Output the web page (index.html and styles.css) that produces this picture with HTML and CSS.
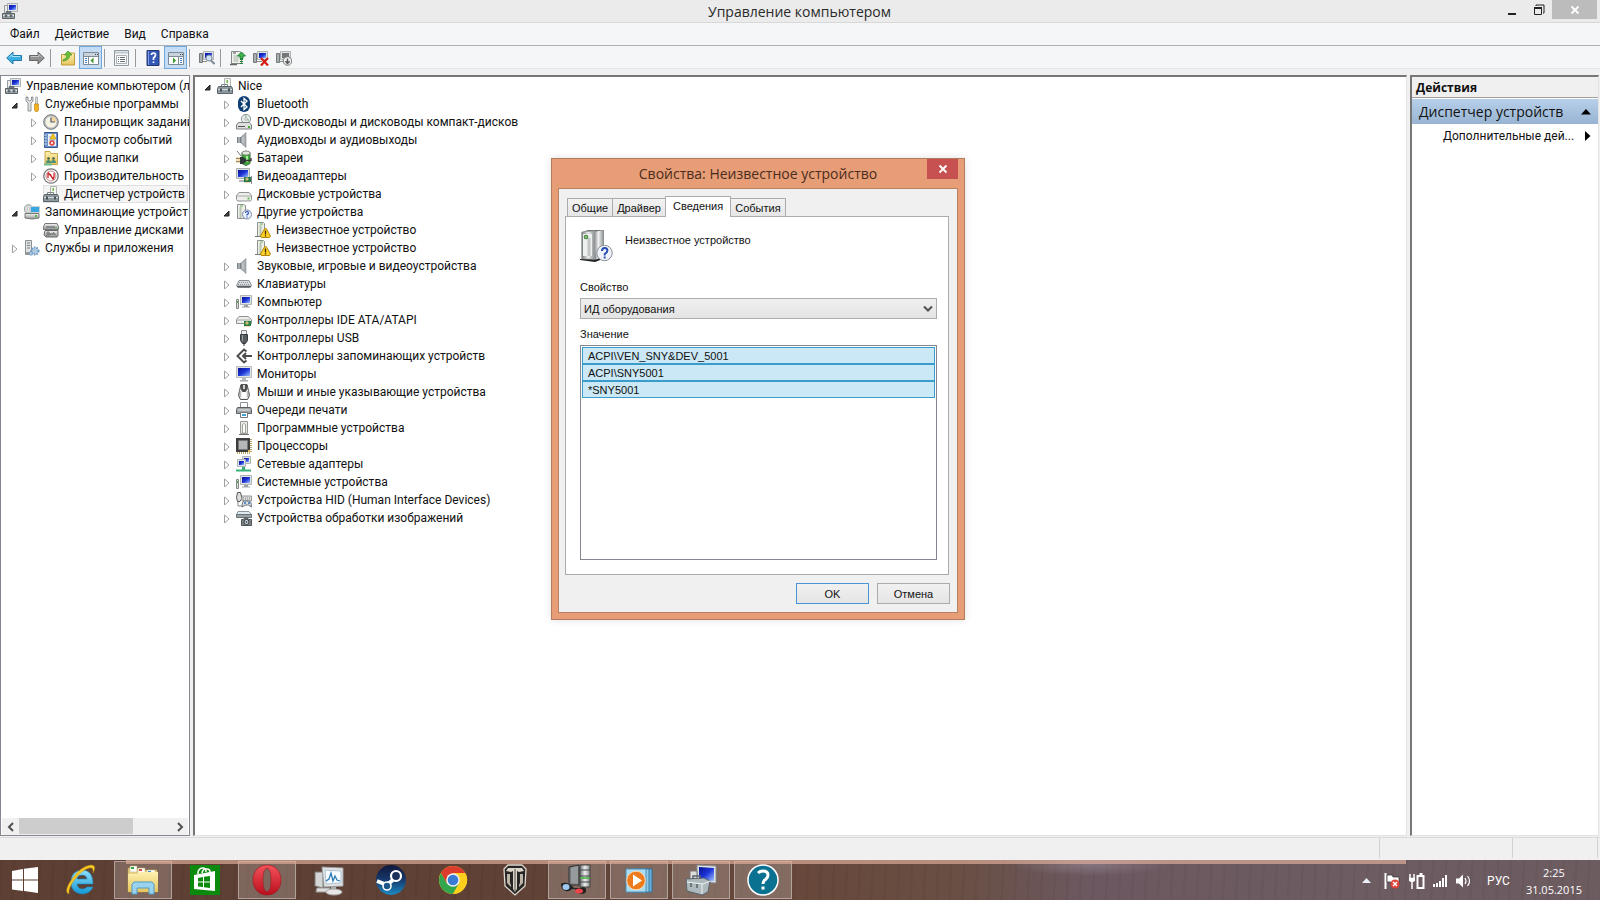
FILE: index.html
```html
<!DOCTYPE html>
<html lang="ru">
<head>
<meta charset="utf-8">
<title>Управление компьютером</title>
<link rel="stylesheet" href="styles.css">
</head>
<body>
<svg class="sprite" aria-hidden="true">
<defs>
<linearGradient id="scr" x1="0" y1="0" x2="1" y2="1"><stop offset="0" stop-color="#0a1290"/><stop offset=".5" stop-color="#1c34d8"/><stop offset="1" stop-color="#9fc2ff"/></linearGradient>
<linearGradient id="gm" x1="0" y1="0" x2="0" y2="1"><stop offset="0" stop-color="#f4f4f2"/><stop offset="1" stop-color="#8f9495"/></linearGradient>
<linearGradient id="gh" x1="0" y1="0" x2="1" y2="0"><stop offset="0" stop-color="#707477"/><stop offset=".5" stop-color="#f0f0f0"/><stop offset="1" stop-color="#85898b"/></linearGradient>
<linearGradient id="bl" x1="0" y1="0" x2="0" y2="1"><stop offset="0" stop-color="#8fe0fb"/><stop offset="1" stop-color="#1497d4"/></linearGradient>
<linearGradient id="fy" x1="0" y1="0" x2="0" y2="1"><stop offset="0" stop-color="#fdf1b0"/><stop offset="1" stop-color="#e6c45c"/></linearGradient>
<linearGradient id="rd" x1="0" y1="0" x2="0" y2="1"><stop offset="0" stop-color="#f5525a"/><stop offset="1" stop-color="#b90f1c"/></linearGradient>
<linearGradient id="st" x1="0" y1="0" x2="0" y2="1"><stop offset="0" stop-color="#11173c"/><stop offset=".5" stop-color="#173a6c"/><stop offset="1" stop-color="#1b8cc4"/></linearGradient>
</defs>
<symbol id="closed" viewBox="0 0 10 10"><path d="M3.500 2v8L8 6z" fill="#fff" stroke="#a0a0a0"/></symbol>
<symbol id="open" viewBox="0 0 10 10"><path d="M8 4v5H3z" fill="#404040" stroke="#222"/></symbol>
<symbol id="mon" viewBox="0 0 16 16"><path d="M.5 .5h15v11H.5z" fill="#dfe2e2" stroke="#b7bcbe"/><path d="M2 2h12v8H2z" fill="url(#scr)"/><path d="M6 12h4v2H6z" fill="#b6babb"/><path d="M4 14h8v1.500H4z" fill="#a9adae"/></symbol>
<symbol id="comp" viewBox="0 0 16 16"><path d="M4.500 1.500h11v9h-11z" fill="#dfe2e2" stroke="#aeb4b6"/><path d="M6 3h8v6H6z" fill="url(#scr)"/><path d="M8 11h4v1.500H8zM6 12.500h8v1H6z" fill="#9da2a4"/><path d="M.5 5.500h2v9h-2z" fill="#d8dad6" stroke="#84898b"/><path d="M1 7h1v2H1z" fill="#55b13b"/></symbol>
<symbol id="mgmt" viewBox="0 0 16 16"><path d="M5.500 .5h10v8h-10z" fill="#e3e6e8" stroke="#aab1b5"/><path d="M7 2h7v5H7z" fill="url(#scr)"/><path d="M2.500 2.500h3v8h-3z" fill="#eee" stroke="#989da0"/><path d="M.5 10.500h12v5H.500z" fill="#9fa8ac" stroke="#5a6367"/><path d="M1 12.500h11" stroke="#e8ecee"/><path d="M4 10V8.500h5V10M3 12h2v2H3zM8 12h2v2H8z" fill="#6d767a" stroke="#545d61" stroke-width=".6"/></symbol>
<symbol id="tools" viewBox="0 0 16 16"><path d="M2 1v4l2 2v8h3V7l2-2V1L7.500 1v3L5.500 5 4 4V1z" fill="#e1e3e3" stroke="#777d80" stroke-width=".8"/><path d="M11.500 1h2v7h-2z" fill="#ddd" stroke="#8d9294" stroke-width=".6"/><path d="M10.500 8h4v6l-1 1.500h-2l-1-1.500z" fill="#f2b31f" stroke="#b47a0b" stroke-width=".6"/></symbol>
<symbol id="clock" viewBox="0 0 16 16"><circle cx="8" cy="8" r="7.300" fill="#b9bdbf" stroke="#75797b"/><circle cx="8" cy="8" r="5.500" fill="#f6f3e3"/><path d="M8 8V2.500A5.500 5.500 0 0 1 13.500 8z" fill="#f4d79b"/><path d="M8 3.500V8h4" fill="none" stroke="#4c5b76" stroke-width="1.200"/></symbol>
<symbol id="events" viewBox="0 0 16 16"><path d="M1.500 .5h13v15h-13z" fill="#6a8fcb" stroke="#33578e"/><path d="M5 2h8v12H5z" fill="#edf2f8"/><path d="M0 3h4M0 6h4M0 9h4M0 12h4" stroke="#d2dbea"/><path d="M6 5h6M6 8h6M6 11h6" stroke="#8da0bd"/><path d="M10 1l3 6H7z" fill="#f6c624" stroke="#ad8507" stroke-width=".5"/><circle cx="9" cy="11" r="2.700" fill="#de4a44"/><path d="M8 10l2 2m0-2l-2 2" stroke="#fff" stroke-width=".8"/></symbol>
<symbol id="shared" viewBox="0 0 16 16"><path d="M2 1.500h5l1 2h6.500v11H2z" fill="url(#fy)" stroke="#c9a750"/><g fill="#3b5e4c"><circle cx="5.500" cy="8.500" r="1.300"/><circle cx="10.500" cy="8.500" r="1.300"/></g><path d="M3 13q0-3 2.500-3T8 13zM8 13q0-3 2.500-3t2.500 3z" fill="#4a8f73"/><path d="M1 14.500h8" stroke="#67bb8b" stroke-width="2"/></symbol>
<symbol id="perf" viewBox="0 0 16 16"><circle cx="8" cy="8" r="7.200" fill="#fff" stroke="#777" stroke-width="1.300"/><circle cx="8" cy="8" r="5" fill="#fff" stroke="#9c4544" stroke-width=".6"/><path d="M5 10V5.500l2.500 1 2 4 1.500-1V5M5 4.500l6 7" fill="none" stroke="#cf2428" stroke-width="1.300"/></symbol>
<symbol id="devmgr" viewBox="0 0 16 16"><path d="M7.500 .5h6v9h-6z" fill="#f4f5ef" stroke="#b1b5b1"/><path d="M9.500 2h1.500v3H9.500z" fill="#74bb51"/><path d="M4.500 9V6.500h6V9" fill="none" stroke="#7b868b"/><path d="M1.500 8.500h13l1 2v5H.5v-5z" fill="#8e9a9f" stroke="#5a666b"/><path d="M1 11.500h14" stroke="#d2dadd"/><path d="M3 10.500h2v3H3zm8 0h2v3h-2z" fill="#485358"/></symbol>
<symbol id="storage" viewBox="0 0 16 16"><circle cx="4.500" cy="5" r="4.300" fill="#dadddd" stroke="#92989a"/><circle cx="4.500" cy="5" r="1.200" fill="#fff" stroke="#999" stroke-width=".5"/><path d="M6.500 2.500h9v6h-9z" fill="#37a6e1" stroke="#c8d0d4"/><path d="M1 9.500h14v4.500q-7 2-14 0z" fill="url(#gm)" stroke="#777"/><path d="M11 11h2v2h-2z" fill="#58b948"/></symbol>
<symbol id="diskmgr" viewBox="0 0 16 16"><path d="M2 1.500h12l1.500 3v3H.5v-3z" fill="url(#gm)" stroke="#777"/><path d="M2 8.500h13v5l-1 1.500H3l-2-2z" fill="url(#gm)" stroke="#666"/><path d="M3 5h9M4 12h8" stroke="#505659"/><path d="M4 14v-4h2v4M10 10l3 3" fill="none" stroke="#777"/><path d="M12 5h2v1h-2z" fill="#6ab654"/></symbol>
<symbol id="services" viewBox="0 0 16 16"><path d="M1.500 .5h6v14h-6z" fill="#dfe2e2" stroke="#8b9193"/><path d="M3 3h3M3 5.500h3M3 8h3" stroke="#7b8588"/><path d="M2 13h4" stroke="#555"/><circle cx="11" cy="11" r="3.500" fill="#bed8ef" stroke="#6995bd" stroke-dasharray="1.500 1" stroke-width="2"/><circle cx="11" cy="11" r="1.300" fill="#fff" stroke="#6995bd" stroke-width=".7"/><circle cx="7" cy="13.500" r="1.800" fill="#a9c6df" stroke="#648cb1" stroke-width=".6"/></symbol>
<symbol id="bt" viewBox="0 0 16 16"><rect x="2" width="12" height="16" rx="6" fill="#0d3f75"/><path d="M5 5l6 6-3 2.500v-11L11 5l-6 6" fill="none" stroke="#fff" stroke-width="1.300"/></symbol>
<symbol id="dvd" viewBox="0 0 16 16"><circle cx="10" cy="5" r="4.600" fill="#e8ecec" stroke="#8e9698"/><path d="M10 5l-2-4h3zM10 5l3 3V5z" fill="#a9cdb0"/><circle cx="10" cy="5" r="1.300" fill="#fff" stroke="#888" stroke-width=".6"/><path d="M2.500 8.500h11l2 2.500v4H.5v-4z" fill="#dee0e0" stroke="#7b8183"/><path d="M2 12.500h7" stroke="#555"/><path d="M12 12h2v2h-2z" fill="#46b02d"/></symbol>
<symbol id="spk" viewBox="0 0 16 16"><path d="M1 5h4v6H1z" fill="#788186"/><path d="M5 5l5-4.500v15L5 11z" fill="#a9aeb1" stroke="#81878a" stroke-width=".6"/><path d="M3 5v6M7 5v6" stroke="#d5d8d9"/></symbol>
<symbol id="bat" viewBox="0 0 16 16"><path d="M6 2.500l4-1.500 4 1.500v11l-4 2-4-2z" fill="#40aa3c" stroke="#356b34"/><ellipse cx="10" cy="3" rx="4" ry="2" fill="#e4e9e2" stroke="#777" stroke-width=".7"/><path d="M11 6v6" stroke="#abeb9c" stroke-width="2"/><path d="M1 1l4 5" stroke="#777"/><path d="M0 8.500h5M0 11.500h5" stroke="#a98a3a" stroke-width="1.500"/><path d="M4 7h3l3 2v3l-3 2H4z" fill="#30383a"/><path d="M10 10.500h5V8" fill="none" stroke="#333" stroke-width="1.300"/></symbol>
<symbol id="video" viewBox="0 0 16 16"><path d="M.5 .5h13v10H.5z" fill="#d9dcdd" stroke="#a9aeb1"/><path d="M2 2h10v7H2z" fill="url(#scr)"/><path d="M3 12h5v2H3z" fill="#b0b4b5"/><path d="M8 9h7v5H8z" fill="#26784c"/><path d="M10 10h2v2h-2zM9 15v-1M11 15v-1M13 15v-1" fill="#bdd9c7" stroke="#d3b760"/><path d="M15.500 8v8" stroke="#888"/></symbol>
<symbol id="disk" viewBox="0 0 16 16"><path d="M3 6.500h10l2.500 3v4l-1 1.500h-13l-1-1.500v-4z" fill="#ededea" stroke="#8d9294"/><path d="M1 10h14" stroke="#aaa"/><path d="M11.500 11.500h2v2h-2z" fill="#64b957"/></symbol>
<symbol id="unk" viewBox="0 0 16 16"><path d="M1.500 .5h6l2 1v13h-8z" fill="#edf0e8" stroke="#8d9290"/><path d="M3.500 3h2v11h-2z" fill="#b8c3b2"/><path d="M4 2h3" stroke="#6bb34e"/><circle cx="11" cy="10.500" r="4.500" fill="#eaf0fb" stroke="#7c8aa6"/><path d="M9.500 9q0-1.500 1.500-1.500T12.500 9q0 .8-1.500 1.800v.7M11 12.500v1" fill="none" stroke="#2850b4" stroke-width="1.200"/></symbol>
<symbol id="warn" viewBox="0 0 16 16"><path d="M2.500 .5h6l1 1v13h-7z" fill="#edf0e8" stroke="#8d9290"/><path d="M4.500 3h2v11h-2z" fill="#b8c3b2"/><path d="M5 2h3" stroke="#6bb34e"/><path d="M0 14.500h6" stroke="#777"/><path d="M9.500 7l1-1 1 1 4 7-1 1.500h-8L5.500 14z" fill="#ffd02a" stroke="#b28707" stroke-linejoin="round"/><path d="M10.500 8.500v4M10.500 13.300v1.200" stroke="#3b2b00" stroke-width="1.300"/></symbol>
<symbol id="kbd" viewBox="0 0 16 16"><path d="M3 4.500h10l2.500 5-1.500 2H2L.5 9.500z" fill="#d9dbdf" stroke="#8c9094"/><path d="M3 6.500h10M2 8.500h12" stroke="#9296a2" stroke-dasharray="1 1"/><path d="M1 10.500h14" stroke="#5a5f66" stroke-width="1.500"/></symbol>
<symbol id="ide" viewBox="0 0 16 16"><path d="M3 4.500h9l3.500 3v4H.5v-4z" fill="#ededea" stroke="#8d9294"/><path d="M1 8h13" stroke="#aaa"/><path d="M8 9h7v5H8z" fill="#2c7f46"/><path d="M10 10h2v2h-2zM9 15v-1M11 15v-1M13 15v-1" fill="#bdd9c7" stroke="#d3b760"/></symbol>
<symbol id="usb" viewBox="0 0 16 16"><path d="M5.500 .5h5v4h-5z" fill="#eee" stroke="#888"/><path d="M4.500 4.500h7v6l-2 3h-3l-2-3z" fill="#555b5f" stroke="#383d40"/><path d="M6.500 5v6" stroke="#9a9fa2"/><path d="M7.500 13h1v3h-1z" fill="#333"/></symbol>
<symbol id="stor" viewBox="0 0 16 16"><path d="M10.500 3.500L8 1.500 1.500 8 8 14.500l2.500-2M8 8h8M10 5L7 8l3 3" fill="none" stroke="#4d4d4d" stroke-width="2"/><path d="M3 8l5-5" stroke="#aaa" stroke-width=".7"/></symbol>
<symbol id="mouse" viewBox="0 0 16 16"><path d="M5 .5h6l1.500 6 1 5-2 4h-7l-2-4 1-5z" fill="#ececec" stroke="#555"/><path d="M4.500 1h7v4L9.500 8h-3l-2-3z" fill="#505050"/><path d="M8 1v4" stroke="#fff" stroke-width="1.500"/><path d="M6 9q2-2 4 0v5H6z" fill="#fff"/><path d="M4 7v6M12 7v6" stroke="#888"/></symbol>
<symbol id="prn" viewBox="0 0 16 16"><path d="M4.500 .5h7v6h-7z" fill="#fff" stroke="#8d9294"/><path d="M1.500 5.500h13l1 2v4H.5v-4z" fill="#9fa4a6" stroke="#5b6063"/><path d="M2 8h12" stroke="#e8e8e8"/><path d="M4.500 10.500h7v5h-7z" fill="#fff" stroke="#777"/><path d="M6 12h4v2H6z" fill="#39a1d8"/></symbol>
<symbol id="soft" viewBox="0 0 16 16"><path d="M4.500 1.500h7v12h-7z" fill="#e8eae5" stroke="#999"/><path d="M6.500 4.500q1.500-2 3 0V13h-3z" fill="#fff" stroke="#9da698"/><path d="M3 14.500h10" stroke="#777"/></symbol>
<symbol id="cpu" viewBox="0 0 16 16"><path d="M0 0h14v14H0z" fill="#3d3d3d"/><path d="M2.500 2.500h9v9h-9z" fill="#b4b8ba" stroke="#777"/><path d="M15 1v14M1 15h14" stroke="#a58b42" stroke-dasharray="1 1" stroke-width="1.600"/><path d="M12 12h2v2h-2z" fill="#e1b94b"/></symbol>
<symbol id="net" viewBox="0 0 16 16"><path d="M6.500 .5h8v7h-8z" fill="#dfe2e2" stroke="#aeb4b6"/><path d="M8 2h5v4H8z" fill="url(#scr)"/><path d="M1.500 3.500h8v7h-8z" fill="#dfe2e2" stroke="#aeb4b6"/><path d="M3 5h5v4H3z" fill="url(#scr)"/><path d="M6 11h3v3H6z" fill="#40a96d"/><path d="M0 14.500h15" stroke="#36b279" stroke-width="2"/></symbol>
<symbol id="hid" viewBox="0 0 16 16"><path d="M1.500 .5h3l1.500 6-2 3H1.500l-1-4z" fill="#ddd" stroke="#555"/><path d="M6 4h9.500v5H6z" fill="#d9dbdd" stroke="#999"/><path d="M7 6h8M7 8h8" stroke="#888" stroke-dasharray="1 1"/><path d="M2 10v4h4" fill="none" stroke="#888"/><path d="M6 15q0-6 2.500-6h4q3 0 3 6l-3-2h-3z" fill="#dbe0e4" stroke="#687078"/><path d="M8 11h2m2 0h2" stroke="#2e71b5" stroke-width="1.500"/></symbol>
<symbol id="img" viewBox="0 0 16 16"><path d="M2 1.500h11l2.500 3H.5z" fill="#ddeaf1" stroke="#88979e"/><path d="M.5 4.500h15v3H.5z" fill="#9aa4a8" stroke="#697377"/><path d="M5.500 9.500h2l1-1.500h3l1 1.500h3v6h-10z" fill="#7b8489" stroke="#4e5559"/><circle cx="10.500" cy="12" r="2.500" fill="#d9e5ec" stroke="#333"/><circle cx="10.500" cy="12" r="1" fill="#456"/></symbol>
<symbol id="back" viewBox="0 0 16 16"><path d="M.7 8L7 2v3.500h8.500v5H7V14z" fill="#38aee3" stroke="#2277a5"/><path d="M3 7.500l3-3v2h8" fill="none" stroke="#a8e3fa"/></symbol>
<symbol id="fwd" viewBox="0 0 16 16"><path d="M15.300 8L9 2v3.500H.5v5H9V14z" fill="#909090" stroke="#666"/><path d="M2 6.500h8v-2l3 3" fill="none" stroke="#c4c4c4"/></symbol>
<symbol id="up" viewBox="0 0 16 16"><path d="M1.500 4.500h4l1-1.500h8v12h-13z" fill="url(#fy)" stroke="#c19b3d"/><path d="M3 10q4-1 4-5H4.500L8 1l4 4H9.500Q10 10 3 11z" fill="#6bc43c" stroke="#3d8d1f" stroke-width=".7"/></symbol>
<symbol id="paneL" viewBox="0 0 16 16"><path d="M.5 2.500h15v12H.5z" fill="#fff" stroke="#7d8b96"/><path d="M1 3h14v3H1z" fill="#cbd3da"/><path d="M1 6.500h14M5.500 7v7" stroke="#7d8b96"/><path d="M2 8.500h2M2 10.500h2M2 12.500h2" stroke="#4480bd"/><path d="M10.500 7.500v6l-3-3z" fill="#3a9a2a"/><path d="M12 4.500h1m1 0h1" stroke="#446"/></symbol>
<symbol id="paneR" viewBox="0 0 16 16"><path d="M.5 2.500h15v12H.5z" fill="#fff" stroke="#7d8b96"/><path d="M1 3h14v3H1z" fill="#cbd3da"/><path d="M1 6.500h14M10.500 7v7" stroke="#7d8b96"/><path d="M12 8.500h2M12 10.500h2M12 12.500h2" stroke="#4480bd"/><path d="M5 7.500v6l3-3z" fill="#3a9a2a"/><path d="M12 4.500h1m1 0h1" stroke="#446"/></symbol>
<symbol id="props" viewBox="0 0 16 16"><path d="M.5 .5h14v15H.5z" fill="#f5f6f7" stroke="#919aa1"/><path d="M1 2.500h13" stroke="#c1cad1" stroke-width="2"/><path d="M2.500 5.500h10v8h-10z" fill="#fff" stroke="#a8b0b6"/><path d="M4 7.500h1m1 0h5M4 9.500h1m1 0h5M4 11.500h1m1 0h5" stroke="#68747d"/></symbol>
<symbol id="help" viewBox="0 0 16 16"><path d="M2 .5h12v15H2z" fill="#3458b8" stroke="#22356d"/><path d="M3.500 1v14" stroke="#7d9de7"/><path d="M6.500 5q0-2 2-2t2 2q0 1.500-2 3v2M8.500 11.500v1.500" fill="none" stroke="#fff" stroke-width="1.700"/></symbol>
<symbol id="scan" viewBox="0 0 16 16"><path d="M4.500 1.500h10v8h-10z" fill="#dfe2e2" stroke="#aeb4b6"/><path d="M6 3h7v5H6z" fill="url(#scr)"/><path d="M.5 3.500h3v9h-3z" fill="#a9aeb0" stroke="#74797b"/><path d="M4 11.500h4" stroke="#888"/><circle cx="10" cy="8" r="3" fill="#cfe2f5" stroke="#7b8a96"/><path d="M12 10.500l3.500 3.500" stroke="#7e8b94" stroke-width="2"/></symbol>
<symbol id="upd" viewBox="0 0 16 16"><path d="M1.500 1.500h8l2 1v11h-10z" fill="#f0f2ec" stroke="#848987"/><path d="M3.500 5h5v7h-5z" fill="#cad3c8"/><path d="M0 14.500h7" stroke="#666" stroke-width="1.500"/><path d="M3 3h3" stroke="#555"/><path d="M11.500 2l4 4h-2.500v2.500h-3V6H7.500zM10 9.500h3M10 11.500h3M10 13.500h3" fill="#42b14f" stroke="#26843a" stroke-width="1"/></symbol>
<symbol id="del" viewBox="0 0 16 16"><path d="M4.500 1.500h10v8h-10z" fill="#dfe2e2" stroke="#aeb4b6"/><path d="M6 3h7v5H6z" fill="url(#scr)"/><path d="M.5 3.500h3v9h-3z" fill="#a9aeb0" stroke="#74797b"/><path d="M4 11.500h5" stroke="#888"/><path d="M8 8l7 7.500M15 8l-7 7.500" stroke="#d61e18" stroke-width="2.200"/></symbol>
<symbol id="dis" viewBox="0 0 16 16"><path d="M4.500 1.500h10v8h-10z" fill="#dfe2e2" stroke="#aeb4b6"/><path d="M6 3h7v5H6z" fill="#777"/><path d="M.5 3.500h3v9h-3z" fill="#a9aeb0" stroke="#74797b"/><path d="M4 11.500h4" stroke="#888"/><circle cx="11.500" cy="11" r="4.300" fill="#f2f2f2" stroke="#777"/><path d="M11.500 8.500v5M9.300 11.300l2.200 2.200 2.200-2.200" fill="none" stroke="#555" stroke-width="1.400"/></symbol>
</svg>

<main class="window">
<header class="titlebar">
  <svg class="ic"><use href="#mgmt"/></svg>
  <h1>Управление компьютером</h1>
  <div class="winbtns">
    <button class="min" aria-label="Свернуть"><svg width="10" height="12"><path d="M0 9h8v2H0z" fill="#222"/></svg></button>
    <button class="max" aria-label="Восстановить"><svg width="12" height="12"><path d="M3 2V1h8v8h-1" fill="none" stroke="#222"/><path d="M1.500 3.500h7v7h-7z" fill="none" stroke="#222"/><path d="M1 4h8" stroke="#222" stroke-width="2"/></svg></button>
    <button class="cls" aria-label="Закрыть"><svg width="10" height="10"><path d="M1.500 1.500l7 7m0-7l-7 7" stroke="#fff" stroke-width="1.800"/></svg></button>
  </div>
</header>
<nav class="menu"><button>Файл</button><button>Действие</button><button>Вид</button><button>Справка</button></nav>
<div class="toolbar">
  <button aria-label="Назад"><svg class="ic"><use href="#back"/></svg></button><button aria-label="Вперед"><svg class="ic"><use href="#fwd"/></svg></button><i class="sep"></i>
  <button aria-label="Вверх"><svg class="ic"><use href="#up"/></svg></button><button class="on" aria-label="Дерево консоли"><svg class="ic"><use href="#paneL"/></svg></button><i class="sep"></i>
  <button aria-label="Свойства"><svg class="ic"><use href="#props"/></svg></button><i class="sep"></i>
  <button aria-label="Справка"><svg class="ic"><use href="#help"/></svg></button><button class="on" aria-label="Панель действий"><svg class="ic"><use href="#paneR"/></svg></button><i class="sep"></i>
  <button aria-label="Обновить конфигурацию"><svg class="ic"><use href="#scan"/></svg></button><i class="sep"></i>
  <button aria-label="Обновить драйверы"><svg class="ic"><use href="#upd"/></svg></button><button aria-label="Удалить"><svg class="ic"><use href="#del"/></svg></button><button aria-label="Отключить"><svg class="ic"><use href="#dis"/></svg></button>
</div>

<div class="panes">
<section class="pane left">
  <ul class="tree">
    <li class="root"><svg class="ic"><use href="#mgmt"/></svg><span>Управление компьютером (л</span></li>
    <li><svg class="tw"><use href="#open"/></svg><svg class="ic"><use href="#tools"/></svg><span>Служебные программы</span></li>
    <li class="l2"><svg class="tw"><use href="#closed"/></svg><svg class="ic"><use href="#clock"/></svg><span>Планировщик заданий</span></li>
    <li class="l2"><svg class="tw"><use href="#closed"/></svg><svg class="ic"><use href="#events"/></svg><span>Просмотр событий</span></li>
    <li class="l2"><svg class="tw"><use href="#closed"/></svg><svg class="ic"><use href="#shared"/></svg><span>Общие папки</span></li>
    <li class="l2"><svg class="tw"><use href="#closed"/></svg><svg class="ic"><use href="#perf"/></svg><span>Производительность</span></li>
    <li class="l2"><svg class="tw"></svg><b class="sel"><svg class="ic"><use href="#devmgr"/></svg><span>Диспетчер устройств</span></b></li>
    <li><svg class="tw"><use href="#open"/></svg><svg class="ic"><use href="#storage"/></svg><span>Запоминающие устройст</span></li>
    <li class="l2"><svg class="tw"></svg><svg class="ic"><use href="#diskmgr"/></svg><span>Управление дисками</span></li>
    <li><svg class="tw"><use href="#closed"/></svg><svg class="ic"><use href="#services"/></svg><span>Службы и приложения</span></li>
  </ul>
  <div class="scroll"><button aria-label="Влево"><svg width="8" height="10"><path d="M6 1L2 5l4 4" fill="none" stroke="#505050" stroke-width="2"/></svg></button><div class="track"><div class="thumb"></div></div><button aria-label="Вправо"><svg width="8" height="10"><path d="M2 1l4 4-4 4" fill="none" stroke="#505050" stroke-width="2"/></svg></button></div>
</section>
<section class="pane mid">
  <ul class="tree">
    <li><svg class="tw"><use href="#open"/></svg><svg class="ic"><use href="#devmgr"/></svg><span>Nice</span></li>
    <li class="l2"><svg class="tw"><use href="#closed"/></svg><svg class="ic"><use href="#bt"/></svg><span>Bluetooth</span></li>
    <li class="l2"><svg class="tw"><use href="#closed"/></svg><svg class="ic"><use href="#dvd"/></svg><span>DVD-дисководы и дисководы компакт-дисков</span></li>
    <li class="l2"><svg class="tw"><use href="#closed"/></svg><svg class="ic"><use href="#spk"/></svg><span>Аудиовходы и аудиовыходы</span></li>
    <li class="l2"><svg class="tw"><use href="#closed"/></svg><svg class="ic"><use href="#bat"/></svg><span>Батареи</span></li>
    <li class="l2"><svg class="tw"><use href="#closed"/></svg><svg class="ic"><use href="#video"/></svg><span>Видеоадаптеры</span></li>
    <li class="l2"><svg class="tw"><use href="#closed"/></svg><svg class="ic"><use href="#disk"/></svg><span>Дисковые устройства</span></li>
    <li class="l2"><svg class="tw"><use href="#open"/></svg><svg class="ic"><use href="#unk"/></svg><span>Другие устройства</span></li>
    <li class="l3"><svg class="tw"></svg><svg class="ic"><use href="#warn"/></svg><span>Неизвестное устройство</span></li>
    <li class="l3"><svg class="tw"></svg><svg class="ic"><use href="#warn"/></svg><span>Неизвестное устройство</span></li>
    <li class="l2"><svg class="tw"><use href="#closed"/></svg><svg class="ic"><use href="#spk"/></svg><span>Звуковые, игровые и видеоустройства</span></li>
    <li class="l2"><svg class="tw"><use href="#closed"/></svg><svg class="ic"><use href="#kbd"/></svg><span>Клавиатуры</span></li>
    <li class="l2"><svg class="tw"><use href="#closed"/></svg><svg class="ic"><use href="#comp"/></svg><span>Компьютер</span></li>
    <li class="l2"><svg class="tw"><use href="#closed"/></svg><svg class="ic"><use href="#ide"/></svg><span>Контроллеры IDE ATA/ATAPI</span></li>
    <li class="l2"><svg class="tw"><use href="#closed"/></svg><svg class="ic"><use href="#usb"/></svg><span>Контроллеры USB</span></li>
    <li class="l2"><svg class="tw"><use href="#closed"/></svg><svg class="ic"><use href="#stor"/></svg><span>Контроллеры запоминающих устройств</span></li>
    <li class="l2"><svg class="tw"><use href="#closed"/></svg><svg class="ic"><use href="#mon"/></svg><span>Мониторы</span></li>
    <li class="l2"><svg class="tw"><use href="#closed"/></svg><svg class="ic"><use href="#mouse"/></svg><span>Мыши и иные указывающие устройства</span></li>
    <li class="l2"><svg class="tw"><use href="#closed"/></svg><svg class="ic"><use href="#prn"/></svg><span>Очереди печати</span></li>
    <li class="l2"><svg class="tw"><use href="#closed"/></svg><svg class="ic"><use href="#soft"/></svg><span>Программные устройства</span></li>
    <li class="l2"><svg class="tw"><use href="#closed"/></svg><svg class="ic"><use href="#cpu"/></svg><span>Процессоры</span></li>
    <li class="l2"><svg class="tw"><use href="#closed"/></svg><svg class="ic"><use href="#net"/></svg><span>Сетевые адаптеры</span></li>
    <li class="l2"><svg class="tw"><use href="#closed"/></svg><svg class="ic"><use href="#comp"/></svg><span>Системные устройства</span></li>
    <li class="l2"><svg class="tw"><use href="#closed"/></svg><svg class="ic"><use href="#hid"/></svg><span>Устройства HID (Human Interface Devices)</span></li>
    <li class="l2"><svg class="tw"><use href="#closed"/></svg><svg class="ic"><use href="#img"/></svg><span>Устройства обработки изображений</span></li>
  </ul>
</section>
<aside class="pane right">
  <h2>Действия</h2>
  <button class="group"><span>Диспетчер устройств</span><svg width="10" height="6"><path d="M0 5.500L5 0l5 5.500z"/></svg></button>
  <button class="more"><span>Дополнительные дей...</span><svg width="6" height="10"><path d="M0 0l5.500 5L0 10z"/></svg></button>
</aside>
</div>
<footer class="status"><i></i><i></i><i></i></footer>
</main>

<section class="dialog" role="dialog" aria-labelledby="dt">
  <header><h2 id="dt">Свойства: Неизвестное устройство</h2><button class="x" aria-label="Закрыть"><svg width="10" height="10"><path d="M1.500 1.500l7 7m0-7l-7 7" stroke="#fff" stroke-width="1.800"/></svg></button></header>
  <div class="client">
    <div class="tabs" role="tablist"><button role="tab">Общие</button><button role="tab">Драйвер</button><button role="tab" class="act" aria-selected="true">Сведения</button><button role="tab">События</button></div>
    <div class="sheet">
      <div class="dev">
        <svg width="34" height="34" viewBox="0 0 34 34"><path d="M2 3l6-2h16v26l-5 4H2z" fill="#6e7275"/><path d="M13 3l11-2v26l-8 4z" fill="url(#gh)"/><path d="M1.500 3L15 2v28H1.500z" fill="url(#gh)" stroke="#a0a4a6" stroke-width=".6"/><path d="M3 5h9v22H3z" fill="#eef0ef"/><path d="M9 9v18" stroke="#c2c6c7" stroke-width="3"/><path d="M0 30l15 1 8-3v2l-8 3-15-2z" fill="#222"/><circle cx="6" cy="8" r="2.300" fill="#4c8b3d"/><path d="M5 8h2" stroke="#d5efcf"/><circle cx="24.500" cy="24" r="7.700" fill="#f0f3f9" stroke="#8a8f97"/><path d="M22 22q0-3 2.700-3t2.700 2.700q0 1.500-2.700 3.300v1.500M24.700 27.500V29.500" fill="none" stroke="#2750b7" stroke-width="2"/></svg>
        <span>Неизвестное устройство</span>
      </div>
      <label for="prop">Свойство</label>
      <div class="combo"><select id="prop"><option>ИД оборудования</option></select><svg width="10" height="8"><path d="M1 1.500l4 4 4-4" fill="none" stroke="#505050" stroke-width="2"/></svg></div>
      <label id="vl">Значение</label>
      <ul class="list" role="listbox" aria-labelledby="vl"><li>ACPI\VEN_SNY&amp;DEV_5001</li><li>ACPI\SNY5001</li><li>*SNY5001</li></ul>
    </div>
    <div class="btns"><button class="def">OK</button><button>Отмена</button></div>
  </div>
</section>

<footer class="taskbar">
  <div class="glow"></div>
  <button class="start" aria-label="Пуск"><svg width="26" height="26"><path d="M0 4l11-2v10.500H0zM12 1.800L26 0v12.500H12zM0 13.500h11V24L0 22.500zM12 13.500h14V26l-14-2z" fill="#fff"/></svg></button>
  <button aria-label="Internet Explorer"><svg viewBox="0 0 32 32"><path d="M28 20H12q1 5 5.500 5 3 0 4.500-2h6q-3 7-11 7Q6 29 6 18T17 6q11 0 11 14zM12 15h10q-.5-4-5-4t-5 4z" fill="url(#bl)" stroke="#1c86bd" stroke-width=".6"/><path d="M4 30Q-2 28 7 15T26 1q6 0 2 8 1-6-4-5Q17 6 10 15T4 30z" fill="#f6c928" stroke="#c99208" stroke-width=".5"/></svg></button>
  <button class="run" aria-label="Проводник"><svg viewBox="0 0 32 32"><path d="M1 4h9l2 2h18v22H1z" fill="#ead588" stroke="#ab9246" stroke-width=".6"/><path d="M3 2h7v6H3zM11 4h7v6h-7zM20 6h8v5h-8z" fill="#fff" stroke="#b7a567" stroke-width=".5"/><path d="M4 3h3v2H4z" fill="#34a842"/><path d="M12 5h3v2h-3z" fill="#dc563b"/><path d="M21 7h3v2h-3z" fill="#378fd0"/><path d="M1 10h9l3-2h18v20H1z" fill="url(#fy)"/><path d="M5 30V20l2-2h18l2 2v10h-5v-6H10v6z" fill="#9bd3ee" stroke="#4f9dc5"/></svg></button>
  <button aria-label="Магазин"><svg viewBox="0 0 32 32"><path d="M1 1h30v30H1z" fill="#0c8a0e"/><path d="M5 11l21-4v20L5 25z" fill="#fff"/><path d="M9 10V8q1-4 5-4 3 0 3 4M13 9q1-5 5-4 3 0 3 3" fill="none" stroke="#fff" stroke-width="1.500"/><path d="M9 14l5-1v4.500H9zM15 12.800l6-.8v5.500h-6zM9 18.500h5V23l-5-.5zM15 18.500h6V24l-6-.8z" fill="#0c8a0e"/></svg></button>
  <button class="run" aria-label="Opera"><svg viewBox="0 0 32 32"><path fill-rule="evenodd" d="M16 1C8 1 2 7 2 16s6 15 14 15 14-6 14-15S24 1 16 1zm0 3.500c3 0 4 5 4 11.500s-1 11.500-4 11.500-4-5-4-11.500 1-11.500 4-11.500z" fill="url(#rd)" stroke="#9a1720" stroke-width=".6"/></svg></button>
  <button aria-label="Монитор ресурсов"><svg viewBox="0 0 32 32"><path d="M2 8h8v16l-8-2z" fill="#d4d6d5" stroke="#777"/><path d="M4 24h13v4H3z" fill="#ddd" stroke="#999"/><path d="M9 3l21 1v18l-19 1z" fill="#e2e4e5" stroke="#9ba0a2"/><path d="M12 6l16 1v12l-15 1z" fill="#f6fbff" stroke="#afc3d1"/><path d="M13 17l3-2 2-6 2 8 2-5 2 4 3 1" fill="none" stroke="#2a7bb5" stroke-width="1.300"/><path d="M18 23h5v4h-5z" fill="#aaa"/><ellipse cx="21" cy="28" rx="8" ry="3" fill="#e6e6e6" stroke="#aaa"/></svg></button>
  <button aria-label="Steam"><svg viewBox="0 0 32 32"><circle cx="16" cy="16" r="15" fill="url(#st)"/><path d="M2 17l10 4 7-6" fill="none" stroke="#fff" stroke-width="4"/><circle cx="12" cy="22" r="4" fill="#1c5689" stroke="#fff" stroke-width="1.600"/><circle cx="21" cy="12" r="5" fill="#1b315b" stroke="#fff" stroke-width="2.200"/></svg></button>
  <button aria-label="Chrome"><svg viewBox="0 0 32 32"><circle cx="16" cy="16" r="14" fill="#fbcf1e"/><path d="M16 9h12.200A14 14 0 0 0 3.900 9l6 10.500z" fill="#dd3b2d"/><path d="M3.900 9A14 14 0 0 0 16 30l6-10.500H9.900z" fill="#32a64d"/><path d="M16 9h12.200A14 14 0 0 1 16 30l6-10.500z" fill="#fbcf1e"/><circle cx="16" cy="16" r="6.800" fill="#f2f2f2"/><circle cx="16" cy="16" r="5.300" fill="#3a7cd5"/></svg></button>
  <button aria-label="World of Tanks"><svg viewBox="0 0 32 32"><path d="M9 1h14l4 4-1 17-10 9L6 22 5 5z" fill="#262523" stroke="#dfd9cf" stroke-width="1.300"/><path d="M9 4h14l2 3-5 1-2-1v18l-2 3-2-3V7l-2 1-5-1z" fill="#dbd4c8"/><path d="M8 10h3v9l1 2v2l-4-4zM24 10h-3v9l-1 2v2l4-4z" fill="#bdb5a8"/><path d="M16 5v22" stroke="#514d47"/></svg></button>
  <button class="run" aria-label="Сервер"><svg viewBox="0 0 32 32"><path d="M8 3L18 1v20H8z" fill="#777b7d" stroke="#333"/><path d="M10 3.500l7-1.500v18l-7-1z" fill="#969a9c"/><path d="M19 1h10v22H19z" fill="url(#gh)" stroke="#444"/><path d="M19 6h10M19 12h10M19 18h10" stroke="#444"/><path d="M19 14h10" stroke="#42b33c" stroke-width="1.500"/><path d="M0 20q2-2 6-1l4 2 3 3h6q5-2 6 1 1 5-5 5-5-1-6-5h-3q-3 3-6 2-5-1-5-7z" fill="#222"/><ellipse cx="5" cy="23" rx="3.500" ry="3" fill="#9fc9f0"/><ellipse cx="18" cy="27" rx="4" ry="2.500" fill="#ee4348"/></svg></button>
  <button class="run" aria-label="Медиапроигрыватель"><svg viewBox="0 0 32 32"><path d="M10 5h19v23H10z" fill="#66b0d8" stroke="#346f99"/><path d="M7 5h19v23H7z" fill="#8fcbe8" stroke="#3e7ba2"/><path d="M3 5h20v23H3z" fill="#aadcf2" stroke="#538fb3"/><circle cx="13" cy="16.500" r="9.300" fill="#ee7b1b" stroke="#fdd7ac"/><path d="M10 10.500v12l9-6z" fill="#fff"/></svg></button>
  <button class="run" aria-label="Управление компьютером"><svg viewBox="0 0 32 32"><path d="M12 1l19 1v17l-19-1z" fill="#dfe3e5" stroke="#878d91"/><path d="M14 3l15 1v13l-15-1z" fill="url(#scr)"/><path d="M5 7h7v10H5z" fill="#ddd" stroke="#777"/><path d="M1 15l18-1 6 3-2 11-6 3-15-4z" fill="#aeb9bd" stroke="#59656a"/><path d="M2 18l16 2 7-3M17 20v10" fill="none" stroke="#eef3f5"/><path d="M8 15v-3h7v3M6 19v4M12 20v4" fill="none" stroke="#59656a" stroke-width="1.500"/></svg></button>
  <button class="run" aria-label="Справка"><svg viewBox="0 0 32 32"><circle cx="16" cy="16" r="15" fill="#0b7191" stroke="#fff" stroke-width="1.500"/><path d="M11 9q2-2 5-2 5 0 5 4 0 2.500-2.500 4.500Q16 17 16 20M16 22.500v3" fill="none" stroke="#fff" stroke-width="3"/></svg></button>
  <div class="tray">
    <svg width="112" height="18" viewBox="0 0 112 18"><path d="M0 11l4.500-5L9 11z" fill="#e9eef8"/><g transform="translate(5)"><path d="M18.500 1v16" stroke="#fff" stroke-width="2"/><path d="M20 3h5l1 2h6v7h-7l-1-2h-4z" fill="#fff" stroke="#332b2b" stroke-width=".7"/><circle cx="28" cy="12" r="4.500" fill="#df4338"/><path d="M26 10l4 4m0-4l-4 4" stroke="#fff" stroke-width="1.500"/><path d="M43 2v4m4-4v4M42 6.500h6M45 6v11" stroke="#fff" stroke-width="1.500"/><path d="M42 7h6v2l-2 1h-2l-2-1z" fill="#fff"/><path d="M50.500 4h6v12h-6zM52.500 2h2v2" fill="none" stroke="#fff" stroke-width="2"/><path d="M66 12h2v3h-2zM69 11h2v4h-2zM72 9h2v6h-2zM75 6h2v9h-2zM78 3h2v12h-2z" fill="#fff"/><path d="M89 6.500h3l4-4v13l-4-4h-3z" fill="#fff"/><path d="M98 6q2 3 0 6M100.500 4q4 5 0 10" fill="none" stroke="#fff" stroke-width="1.200"/></g></svg>
    <span class="lang">РУС</span>
    <time>2:25<br>31.05.2015</time>
  </div>
</footer>
</body>
</html>
```
FILE: styles.css
```css
* { box-sizing: border-box; }
html, body { height: 100%; margin: 0; }
body { display: flex; flex-direction: column; overflow: hidden; background: #f0f0f0; color: #111; font: 12px/18px Roboto, "Noto Sans", sans-serif; }
button { margin: 0; padding: 0; border: 0; background: none; color: inherit; font: inherit; }
h1, h2, ul { margin: 0; padding: 0; font-weight: normal; list-style: none; }
svg { flex: none; display: block; }
.sprite { position: absolute; width: 0; height: 0; }
.ic { width: 16px; height: 16px; }
.window { flex: 1; min-height: 0; display: flex; flex-direction: column; }

.titlebar { display: grid; grid-template-columns: 120px 1fr 120px; height: 23px; padding: 0 3px 0 2px; background: #ebebeb; border-bottom: 1px solid #d8d8d8; }
.titlebar > .ic { margin-top: 3px; }
.titlebar h1 { text-align: center; font: 14px/23px "Open Sans", "Noto Sans", sans-serif; color: #2a2a2a; }
.winbtns { display: flex; justify-content: flex-end; height: 19px; }
.winbtns button { display: flex; align-items: center; justify-content: center; width: 26px; }
.winbtns .cls { width: 45px; background: #bcbcbc; }
.menu { display: flex; gap: 15px; height: 23px; padding-left: 10px; background: #f5f6f7; border-bottom: 1px solid #aeb0b2; }
.toolbar { display: flex; height: 23px; padding-left: 2px; background: #f5f6f7; border-bottom: 1px solid #e5e6e7; }
.toolbar button { display: flex; align-items: center; justify-content: center; width: 23px; height: 23px; }
.toolbar .on { background: #c4ddf5; border: 1px solid #6fa8dc; }
.sep { width: 8px; height: 18px; margin-top: 3px; border-left: 2px solid transparent; background: linear-gradient(#999, #999) 0 0 / 1px 100% no-repeat padding-box; }

.panes { flex: 1; min-height: 0; display: grid; grid-template-columns: 190px 1fr 189px; gap: 3px; padding: 6px 1px 1px 0; }
.pane { min-width: 0; background: #fff; border: 1px solid #828790; overflow: hidden; }
.left { display: flex; flex-direction: column; justify-content: space-between; padding: 1px 1px 0; }
.mid, .right { border-width: 2px 1px 1px 2px; border-color: #777 #e3e3e3 #e3e3e3 #777; }
.tree li { display: flex; align-items: center; height: 18px; padding-left: 7px; white-space: nowrap; }
.tree .tw { width: 10px; height: 10px; margin-right: 5px; }
.tree .ic { margin-right: 5px; }
.tree .l2 { padding-left: 26px; }
.tree .l3 { padding-left: 45px; }
.tree .root { padding-left: 3px; }
.sel { display: flex; align-items: center; height: 18px; font-weight: normal; background: #f5f5f5; box-shadow: inset 0 0 0 1px #dedede; padding-right: 3px; }
.scroll { display: flex; height: 17px; background: #f0f0f0; }
.scroll button { display: flex; align-items: center; justify-content: center; width: 17px; }
.track { flex: 1; }
.thumb { width: 75%; height: 16px; background: #cdcdcd; }

.right h2 { height: 21px; padding-left: 4px; background: #f0f0f0; border-bottom: 1px solid #a0a0a0; font: bold 12px/22px "Open Sans", "Noto Sans", sans-serif; margin-bottom: 1px; }
.right button { display: flex; align-items: center; justify-content: space-between; width: 100%; white-space: nowrap; }
.right .group { height: 25px; padding: 0 7px 0 7px; background: linear-gradient(#b7d0ea, #98b4d2); font: 14px/25px "Open Sans", "Noto Sans", sans-serif; }
.right .more { height: 24px; padding: 0 7px 0 31px; }
.status { display: flex; justify-content: flex-end; height: 23px; background: #f0f0f0; border-top: 1px solid #dadada; }
.status i { width: 133px; margin-bottom: 2px; border-left: 1px solid #d2d2d2; }
.status i:last-child { width: 3px; }
.status i:nth-child(2) { width: 85px; }

.dialog { position: absolute; left: 551px; top: 158px; width: 414px; padding: 0 6px 6px; background: #e79d76; border: 1px solid #b47c5e; box-shadow: 0 0 8px rgba(0, 0, 0, .12); font: 11px/14px "Liberation Sans", Arial, sans-serif; }
.dialog header { position: relative; height: 29px; }
.dialog h2 { text-align: center; font: 14px/29px "Open Sans", "Noto Sans", sans-serif; color: #4a2d20; }
.x { position: absolute; right: 0; top: 0; display: flex; align-items: center; justify-content: center; width: 31px; height: 20px; background: #c75050; }
.client { padding: 7px 8px 8px 6px; background: #f0f0f0; border: 1px solid #b88161; }
.tabs { display: flex; align-items: flex-end; height: 20px; padding-left: 2px; }
.tabs button { height: 18px; padding: 0 4px; background: linear-gradient(#f2f2f2, #e6e6e6); border: 1px solid #acacac; border-bottom: 0; margin-right: -1px; }
.tabs .act { position: relative; height: 21px; margin-bottom: -1px; padding: 0 7px 2px; background: #fff; }
.sheet { display: flex; flex-direction: column; padding: 12px 11px 14px 14px; background: #fff; border: 1px solid #acacac; }
.dev { display: flex; gap: 11px; height: 51px; }
.dev span { margin-top: 4px; }
.sheet label { margin-bottom: 4px; }
.combo { display: flex; align-items: center; height: 21px; margin-bottom: 8px; padding-right: 3px; background: linear-gradient(#efefef, #e4e4e4); border: 1px solid #acacac; }
.combo select { flex: 1; height: 19px; padding: 0 3px; appearance: none; border: 0; background: none; color: inherit; font: inherit; }
.list { height: 215px; padding: 1px; border: 1px solid #828790; }
.list li { height: 17px; padding-left: 5px; line-height: 16px; background: #cbe8f6; border: 1px solid #3a9ccb; }
.btns { display: flex; justify-content: flex-end; gap: 8px; margin: 8px -1px 0 0; }
.btns button { width: 73px; height: 21px; background: linear-gradient(#f1f1f1, #e5e5e5); border: 1px solid #acacac; }
.btns .def { border-color: #4a93d6; }

.taskbar { position: relative; display: flex; align-items: center; height: 40px; color: #fff; background: radial-gradient(ellipse 80px 12px at 1090px 4px, rgba(160, 145, 160, .5), transparent), repeating-linear-gradient(93deg, rgba(0, 0, 0, .04) 0 2px, transparent 3px 13px), linear-gradient(90deg, #5d3f33, #5f4135 30%, #67483b 50%, #694f44 60%, #6c5860 68%, #6d5c62 85%, #6c5b5f); }
.glow { position: absolute; top: 0; left: 126px; right: 194px; height: 4px; background: rgba(228, 178, 158, .65); }
.taskbar button { display: flex; align-items: center; justify-content: center; width: 58px; height: 38px; margin: 0 2px; }
.taskbar button svg { width: 32px; height: 32px; }
.taskbar .start { width: 50px; margin: 0; }
.taskbar .start svg { width: 26px; height: 26px; }
.run { background: rgba(255, 255, 255, .2); border: 1px solid rgba(255, 255, 255, .38); }
.tray { display: flex; align-items: center; margin-left: auto; padding: 1px 18px 0 0; }
.lang { margin: 0 16px 0 13px; }
.tray time { font: 11px/17px "Open Sans", "Noto Sans", sans-serif; text-align: center; }
```
